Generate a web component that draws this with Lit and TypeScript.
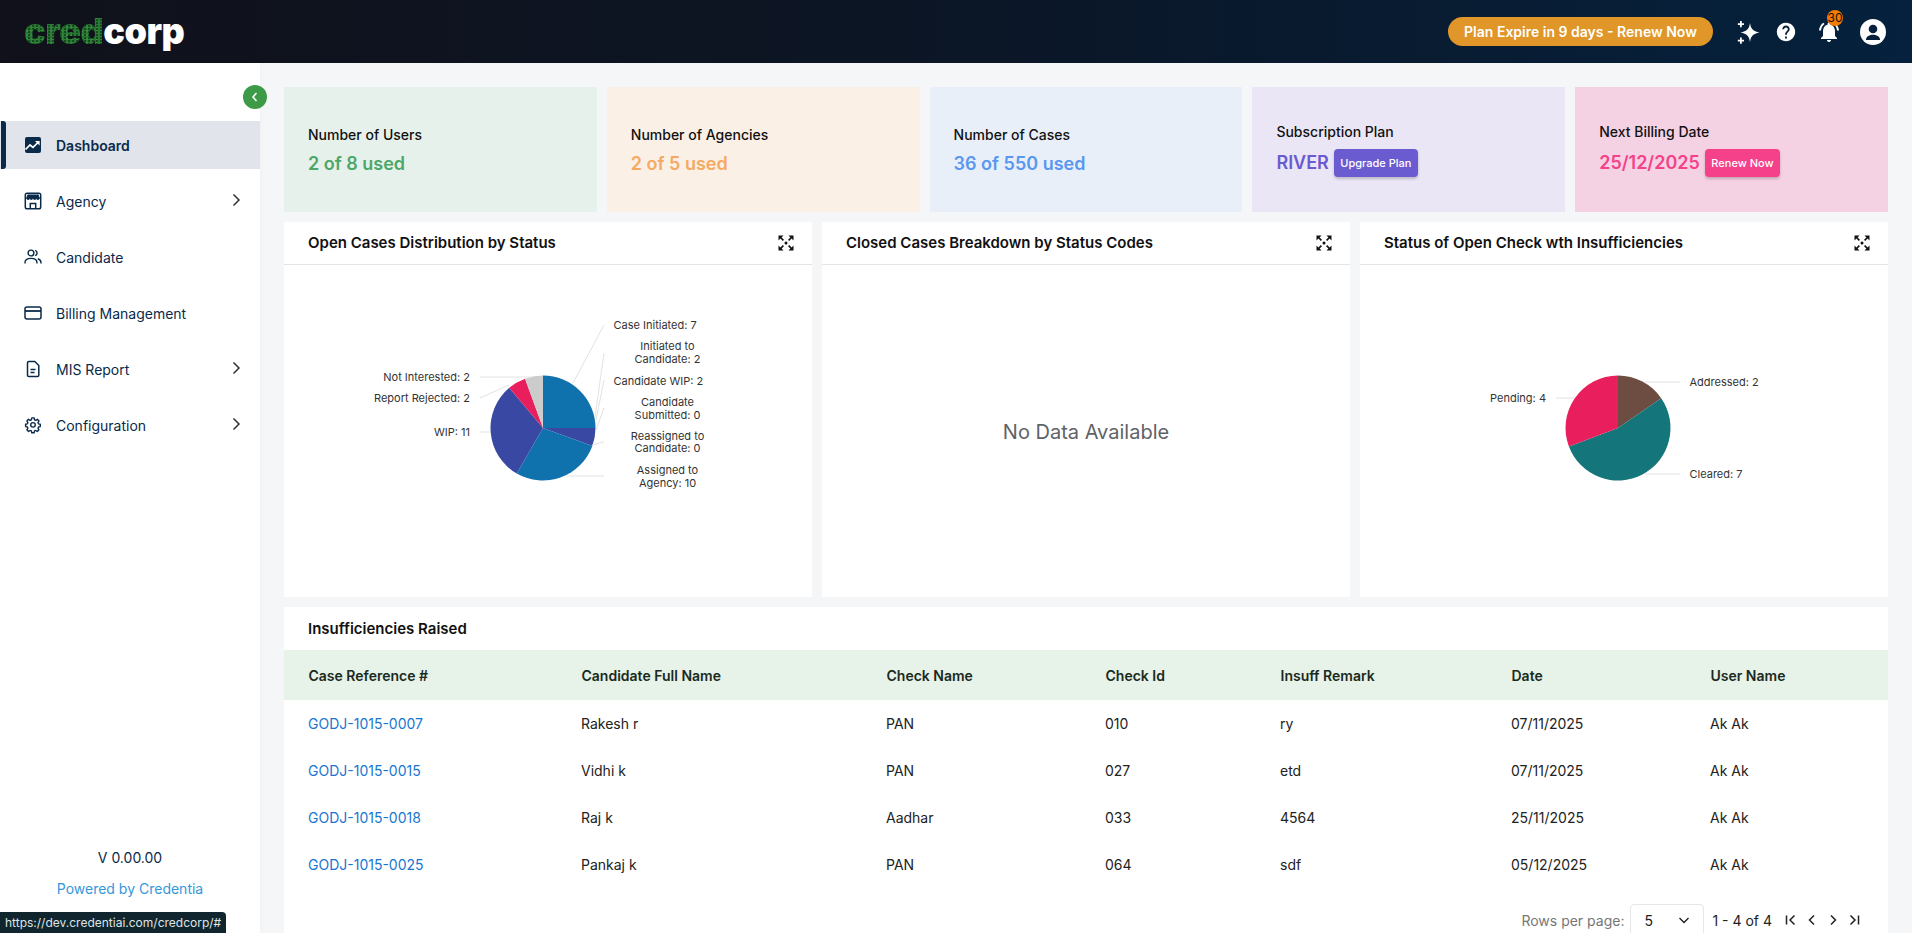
import { LitElement, html, css, svg } from "lit";
import { customElement } from "lit/decorators.js";

const icon = (d: string, size = 24, cls = "") =>
  html`<svg class=${cls} width=${size} height=${size} viewBox="0 0 24 24" fill="currentColor"><path d=${d}></path></svg>`;

const P = {
  help: "M12 2C6.48 2 2 6.48 2 12s4.48 10 10 10 10-4.48 10-10S17.52 2 12 2zm1 17h-2v-2h2v2zm2.07-7.75l-.9.92C13.45 12.9 13 13.5 13 15h-2v-.5c0-1.1.45-2.1 1.17-2.83l1.24-1.26c.37-.36.59-.86.59-1.41 0-1.1-.9-2-2-2s-2 .9-2 2H8c0-2.21 1.79-4 4-4s4 1.79 4 4c0 .88-.36 1.68-.93 2.25z",
  bell: "M7.58 4.08L6.15 2.65C3.75 4.48 2.17 7.3 2.03 10.5h2c.15-2.65 1.51-4.97 3.55-6.42zm12.39 6.42h2c-.15-3.2-1.73-6.02-4.12-7.85l-1.42 1.43c2.02 1.45 3.39 3.77 3.54 6.42zM18 11c0-3.07-1.64-5.64-4.5-6.32V4c0-.83-.67-1.5-1.5-1.5s-1.5.67-1.5 1.5v.68C7.63 5.36 6 7.92 6 11v5l-2 2v1h16v-1l-2-2v-5zm-6 11c.14 0 .27-.01.4-.04.65-.14 1.18-.58 1.44-1.18.1-.24.15-.5.15-.78h-4c.01 1.1.9 2 2.01 2z",
  expand: "M15 3l2.3 2.3-2.89 2.87 1.42 1.42L18.7 6.7 21 9V3zM3 9l2.3-2.3 2.87 2.89 1.42-1.42L6.7 5.3 9 3H3zm6 12l-2.3-2.3 2.89-2.87-1.42-1.42L5.3 17.3 3 15v6zm12-6l-2.3 2.3-2.87-2.89-1.42 1.42 2.89 2.87L15 21h6zM12 10.2a1.8 1.8 0 1 1 0 3.6 1.8 1.8 0 0 1 0-3.6z",
  sparkle: "M14 3c.9 6.100 3 8.300 9.500 9.500C17 13.700 14.900 15.900 14 22c-.9-6.100-3-8.300-9.500-9.500C11 11.300 13.100 9.100 14 3zM4 1h1.800v2.200H8V5H5.800v2.200H4V5H1.800V3.200H4zM4 17.500h1.800v2.200H8v1.800H5.800v2.200H4v-2.200H1.800v-1.800H4z",
};

const navIcons: Record<string, unknown> = {
  dashboard: html`<svg width="18" height="18" viewBox="0 0 18 18"><rect x="1" y="1" width="16" height="16" rx="2" fill="#0a2a4a"></rect><path d="M1.500 13.500 6 9l3 2.400L14.500 6" fill="none" stroke="#fff" stroke-width="1.700"></path><path d="M11 5h4.600v4.400z" fill="#fff"></path></svg>`,
  agency: html`<svg width="18" height="18" viewBox="0 0 18 18" fill="none" stroke="#0a2a4a" stroke-width="1.500"><rect x="1.300" y="1.300" width="15.400" height="15.400" rx="1.800"></rect><path d="M4 2.500 2.500 6.500c.8 1.300 2.500 1.300 3.300 0 .9 1.300 2.400 1.300 3.200 0 .8 1.300 2.300 1.300 3.200 0 .8 1.300 2.500 1.300 3.300 0L14 2.500" fill="#0a2a4a" stroke-width="1"></path><path d="M6.300 16.500v-5h5.400v5"></path></svg>`,
  candidate: html`<svg width="18" height="18" viewBox="0 0 18 18" fill="none" stroke="#0a2a4a" stroke-width="1.400"><circle cx="7" cy="5" r="2.900"></circle><path d="M11.200 2.300a2.900 2.900 0 0 1 0 5.400"></path><path d="M1 15.400v-.6c0-2.500 2.200-4.400 6-4.400s6 1.900 6 4.400v.6"></path><path d="M13.800 10.800c1.900.5 3.200 2 3.200 4v.6"></path></svg>`,
  billing: html`<svg width="18" height="18" viewBox="0 0 18 18" fill="none" stroke="#0a2a4a" stroke-width="1.500"><rect x="1" y="3" width="16" height="12" rx="2"></rect><path d="M1 7h16" stroke-width="1.800"></path></svg>`,
  report: html`<svg width="18" height="18" viewBox="0 0 18 18" fill="none" stroke="#0a2a4a" stroke-width="1.500"><path d="M4.800 1.500h6l4 4v9.700c0 .7-.6 1.300-1.300 1.300H4.800c-.7 0-1.300-.6-1.300-1.300V2.800c0-.7.6-1.300 1.300-1.300z"></path><path d="M6.500 9.500h5M6.500 12.500h4" stroke-width="1.300"></path></svg>`,
  config: html`<svg width="18" height="18" viewBox="-1 -1 26 26" fill="none" stroke="#0a2a4a" stroke-width="2" stroke-linejoin="round"><path d="M10.300 2.500h3.400l.5 2.800 1.700.8 2.400-1.500 2.400 2.400-1.500 2.400.8 1.700 2.500.6v3.400l-2.600.6-.7 1.700 1.400 2.300-2.400 2.400-2.300-1.400-1.700.7-.6 2.600h-3.400l-.6-2.600-1.700-.7-2.300 1.400-2.400-2.400 1.400-2.300-.7-1.700-2.600-.6v-3.400l2.500-.6.8-1.700-1.500-2.400 2.400-2.400 2.400 1.500 1.700-.8z" transform="translate(0 -.8)"></path><circle cx="12" cy="11.800" r="3.300"></circle></svg>`,
};

const nav = [
  { id: "dashboard", label: "Dashboard", active: true },
  { id: "agency", label: "Agency", more: true },
  { id: "candidate", label: "Candidate" },
  { id: "billing", label: "Billing Management" },
  { id: "report", label: "MIS Report", more: true },
  { id: "config", label: "Configuration", more: true },
];

const columns = [
  "Case Reference #",
  "Candidate Full Name",
  "Check Name",
  "Check Id",
  "Insuff Remark",
  "Date",
  "User Name",
];
const rows = [
  ["GODJ-1015-0007", "Rakesh r", "PAN", "010", "ry", "07/11/2025", "Ak Ak"],
  ["GODJ-1015-0015", "Vidhi k", "PAN", "027", "etd", "07/11/2025", "Ak Ak"],
  ["GODJ-1015-0018", "Raj k", "Aadhar", "033", "4564", "25/11/2025", "Ak Ak"],
  ["GODJ-1015-0025", "Pankaj k", "PAN", "064", "sdf", "05/12/2025", "Ak Ak"],
];

type Slice = [number, string];
function pie(cx: number, cy: number, r: number, slices: Slice[]) {
  const total = slices.reduce((a, s) => a + s[0], 0);
  let acc = 0;
  return slices.map(([v, color]) => {
    const a0 = (acc / total) * 2 * Math.PI;
    acc += v;
    const a1 = (acc / total) * 2 * Math.PI;
    const large = a1 - a0 > Math.PI ? 1 : 0;
    const pt = (a: number) => `${cx + r * Math.sin(a)} ${cy - r * Math.cos(a)}`;
    return svg`<path d="M${cx} ${cy}L${pt(a0)}A${r} ${r} 0 ${large} 1 ${pt(a1)}Z" fill=${color}></path>`;
  });
}
const label = (x: number, y: number, t: string, anchor = "start") =>
  svg`<text x=${x} y=${y + 4} text-anchor=${anchor}>${t}</text>`;
const line = (d: string) => svg`<path d=${d}></path>`;

@customElement("app-root")
export class AppRoot extends LitElement {
  static styles = css`
    :host {
      display: block;
      width: 1912px;
      height: 933px;
      overflow: hidden;
      position: relative;
      font-family: Inter, "Noto Sans", sans-serif;
      background: #f5f6f8;
      color: #111;
    }
    .top {
      height: 63px;
      display: flex;
      align-items: center;
      justify-content: space-between;
      background: linear-gradient(90deg, #10111a 0%, #0c1524 45%, #05213d 100%);
      padding: 0 26px 0 24px;
    }
    .logo {
      font-family: Inter, sans-serif;
      font-weight: 900;
      font-size: 36px;
      letter-spacing: -0.5px;
      line-height: 1;
      color: #fff;
      display: flex;
      margin-top: -2px;
    }
    .logo .g {
      color: transparent;
      background-color: #2a7a33;
      background-image: radial-gradient(circle at 1px 1px, #164a20 0.8px, transparent 1px),
        radial-gradient(circle at 3px 2px, #378f3e 0.8px, transparent 1px);
      background-size: 4px 3px, 5px 4px;
      -webkit-background-clip: text;
      background-clip: text;
    }
    .tools {
      display: flex;
      align-items: center;
      color: #fff;
    }
    .pill {
      width: 265px;
      height: 29px;
      border-radius: 15px;
      background: #e09628;
      color: #fff;
      font-size: 14px;
      font-weight: 600;
      display: flex;
      align-items: center;
      justify-content: center;
      margin-right: 20px;
    }
    .tool {
      display: flex;
      align-items: center;
      justify-content: center;
    }
    .t-spark { width: 30px; margin-right: 8px; }
    .t-help { width: 30px; margin-right: 13px; }
    .t-bell { width: 30px; margin-right: 16px; position: relative; }
    .badge {
      position: absolute;
      top: -10px;
      left: 13px;
      width: 16px;
      height: 16px;
      border-radius: 50%;
      background: #f57c00;
      color: #111;
      font-size: 12px;
      line-height: 16px;
      text-align: center;
    }
    .body {
      display: flex;
      height: 870px;
    }
    .side {
      width: 260px;
      flex: none;
      background: #fff;
      position: relative;
      display: flex;
      flex-direction: column;
      padding-top: 58px;
      box-sizing: border-box;
      box-shadow: 0 0 6px rgba(0, 0, 0, 0.03);
    }
    .collapse {
      position: absolute;
      top: 22px;
      left: 243px;
      width: 24px;
      height: 24px;
      border-radius: 50%;
      background: #3d9a47;
      display: flex;
      align-items: center;
      justify-content: center;
      z-index: 2;
    }
    .menu {
      display: flex;
      flex-direction: column;
      gap: 8px;
    }
    .item {
      height: 48px;
      display: flex;
      align-items: center;
      padding-left: 24px;
      padding-right: 17px;
      color: #0a2a4a;
      font-size: 14px;
      position: relative;
    }
    .item.active {
      background: #e1e4ea;
      font-weight: 600;
    }
    .item.active::before {
      content: "";
      position: absolute;
      left: 1px;
      top: 0;
      bottom: 0;
      width: 5px;
      background: #0a2a4a;
      border-radius: 0 3px 3px 0;
    }
    .item .name {
      margin-left: 14px;
      flex: 1;
    }
    .chev {
      margin-top: -2px;
      color: #333;
    }
    .foot {
      margin-top: auto;
      padding-bottom: 34px;
      text-align: center;
      font-size: 14px;
    }
    .ver {
      color: #0a2a4a;
      line-height: 20px;
      margin-bottom: 11px;
    }
    .pow {
      color: #3498db;
      line-height: 20px;
    }
    .status {
      position: absolute;
      left: 0;
      bottom: 0;
      width: 226px;
      height: 21px;
      box-sizing: border-box;
      padding-left: 5px;
      background: #10252d;
      color: #dfe5e8;
      font-size: 12px;
      line-height: 21px;
      white-space: nowrap;
      overflow: hidden;
      border-radius: 0 4px 0 0;
      z-index: 3;
    }
    .main {
      flex: 1;
      min-width: 0;
      padding: 24px 24px 0;
      display: flex;
      flex-direction: column;
      gap: 10px;
    }
    .cards {
      display: grid;
      grid-template-columns: repeat(5, 1fr);
      gap: 10px;
      height: 125px;
      flex: none;
    }
    .card {
      padding: 2px 0 0 24px;
      display: flex;
      flex-direction: column;
      justify-content: center;
      gap: 6px;
    }
    .card .lab {
      font-size: 14px;
      font-weight: 500;
      line-height: 20px;
      color: #111;
    }
    .card .val {
      font-size: 18px;
      font-weight: 600;
      line-height: 26px;
    }
    .card.plan { gap: 7px; padding: 0 0 1px 24px; }
    .card .vrow {
      display: flex;
      align-items: center;
      gap: 5px;
      height: 28px;
    }
    .btn {
      height: 28px;
      padding: 0 6.5px;
      border-radius: 4px;
      color: #fff;
      font-size: 11px;
      font-weight: 500;
      display: flex;
      align-items: center;
      box-shadow: 0 2px 3px rgba(0, 0, 0, 0.2);
    }
    .c-green { background: #e7f1ec; }
    .c-green .val { color: #4da768; }
    .c-orange { background: #fbf0e6; }
    .c-orange .val { color: #f5aa64; }
    .c-blue { background: #e8eff9; }
    .c-blue .val { color: #5a97ee; }
    .c-purple { background: #ebe6f5; }
    .c-purple .val { color: #6b5bd0; }
    .c-purple .btn { background: #6b5bd0; }
    .c-pink { background: #f5d2e3; }
    .c-pink .val { color: #f5418a; }
    .c-pink .btn { background: #f5418a; }
    .charts {
      display: grid;
      grid-template-columns: repeat(3, 1fr);
      gap: 10px;
      height: 375px;
      flex: none;
    }
    .panel {
      background: #fff;
      display: flex;
      flex-direction: column;
      min-width: 0;
    }
    .phead {
      height: 42px;
      flex: none;
      border-bottom: 1px solid #e3e4e6;
      display: flex;
      align-items: center;
      justify-content: space-between;
      padding: 0 16px 0 24px;
      font-size: 15px;
      font-weight: 600;
      color: #111;
    }
    .phead span {
      margin-top: -2px;
    }
    .pbody {
      flex: 1;
      min-height: 0;
      display: flex;
      align-items: center;
      justify-content: center;
    }
    .pbody svg {
      display: block;
    }
    .nodata {
      font-size: 20px;
      color: #5f6368;
      margin-top: 1px;
    }
    .chart text {
      font-family: Inter, sans-serif;
      font-size: 11px;
      fill: #333;
    }
    .chart .links {
      fill: none;
      stroke: #e2e2e2;
      stroke-width: 1;
    }
    .tablecard {
      background: #fff;
      flex: 1;
      min-height: 0;
      display: flex;
      flex-direction: column;
    }
    .ttitle {
      height: 43px;
      flex: none;
      display: flex;
      align-items: center;
      padding-left: 24px;
      font-size: 15px;
      font-weight: 600;
    }
    .tr {
      display: grid;
      grid-template-columns: 273px 305px 219px 175px 231px 199px 202px;
      align-items: center;
      height: 47px;
      flex: none;
      font-size: 14px;
      color: #222;
    }
    .tr > div {
      padding-left: 24px;
    }
    .tr.head {
      height: 50px;
      background: #e7f2e9;
      font-weight: 600;
      color: #1a2a20;
      font-size: 14px;
    }
    .tr.head > div {
      padding-left: 24.5px;
      padding-top: 1px;
    }
    .tr .link {
      color: #1976d2;
    }
    .pager {
      display: flex;
      align-items: center;
      justify-content: flex-end;
      height: 48px;
      flex: none;
      margin-top: 8px;
      padding-right: 27px;
      font-size: 14px;
      color: #222;
    }
    .pager .rpp {
      color: #777;
      margin-right: 6px;
    }
    .select {
      width: 74px;
      height: 40px;
      box-sizing: border-box;
      border: 1px solid #e6e7e9;
      border-radius: 4px;
      display: flex;
      align-items: center;
      justify-content: space-between;
      padding: 0 13px 8px 13px;
      margin-right: 8px;
      margin-top: 8px;
      color: #222;
    }
    .range {
      margin-right: 12px;
    }
    .pgicons {
      display: flex;
      gap: 7px;
      color: #222;
    }
    .avatar {
      display: block;
    }
  `;

  private openChart() {
    return html`<svg class="chart" width="528" height="332" viewBox="284 265 528 332">
      ${pie(543, 428, 52.5, [
        [9, "#1072ac"],
        [2, "#3949a3"],
        [10, "#1072ac"],
        [11, "#3949a3"],
        [2, "#e91e5c"],
        [2, "#cccccc"],
      ])}
      <g class="links">
        ${line("M604 325L573 383")}
        ${line("M604 353L595 417")}
        ${line("M604 380L596 420")}
        ${line("M604 408L596 430")}
        ${line("M604 442L592 445")}
        ${line("M604 476L566 476")}
        ${line("M480 377L532 377")}
        ${line("M480 398L509 385")}
        ${line("M480 432L490 432")}
      </g>
      ${label(613.5, 325, "Case Initiated: 7")}
      ${label(667.5, 346, "Initiated to", "middle")}
      ${label(667.5, 359, "Candidate: 2", "middle")}
      ${label(613.5, 381, "Candidate WIP: 2")}
      ${label(667.5, 402, "Candidate", "middle")}
      ${label(667.5, 415, "Submitted: 0", "middle")}
      ${label(667.5, 436, "Reassigned to", "middle")}
      ${label(667.5, 448, "Candidate: 0", "middle")}
      ${label(667.5, 470, "Assigned to", "middle")}
      ${label(667.5, 483, "Agency: 10", "middle")}
      ${label(470, 377, "Not Interested: 2", "end")}
      ${label(470, 398, "Report Rejected: 2", "end")}
      ${label(470, 432, "WIP: 11", "end")}
    </svg>`;
  }

  private insuffChart() {
    return html`<svg class="chart" width="528" height="332" viewBox="1360 265 528 332">
      ${pie(1618, 428, 52.5, [
        [2, "#6d4c41"],
        [7, "#14757a"],
        [4, "#e91e5c"],
      ])}
      <g class="links">
        ${line("M1680 382L1645 382")}
        ${line("M1680 474L1645 474")}
        ${line("M1556 398L1574 398")}
      </g>
      ${label(1689.5, 382, "Addressed: 2")}
      ${label(1689.5, 474, "Cleared: 7")}
      ${label(1546, 398, "Pending: 4", "end")}
    </svg>`;
  }

  private panel(title: string, content: unknown) {
    return html`<section class="panel">
      <div class="phead"><span>${title}</span>${icon(P.expand, 20)}</div>
      <div class="pbody">${content}</div>
    </section>`;
  }

  render() {
    return html`
      <header class="top">
        <div class="logo"><span class="g">cred</span><span>corp</span></div>
        <div class="tools">
          <div class="pill">Plan Expire in 9 days - Renew Now</div>
          <div class="tool t-spark">${icon(P.sparkle, 24)}</div>
          <div class="tool t-help">${icon(P.help, 22)}</div>
          <div class="tool t-bell">${icon(P.bell, 24)}<span class="badge">30</span></div>
          <div class="tool">
            <svg class="avatar" width="26" height="26" viewBox="0 0 26 26">
              <circle cx="13" cy="13" r="13" fill="#fff"></circle>
              <circle cx="13" cy="10" r="4.300" fill="#05213d"></circle>
              <path d="M6 20.500c0-3.300 4-4.800 7-4.800s7 1.500 7 4.800v.5H6z" fill="#05213d"></path>
            </svg>
          </div>
        </div>
      </header>
      <div class="body">
        <aside class="side">
          <div class="collapse">
            <svg width="14" height="14" viewBox="0 0 14 14" fill="none" stroke="#fff" stroke-width="1.600"><path d="M8.500 3 5 7l3.500 4"></path></svg>
          </div>
          <nav class="menu">
            ${nav.map(
              (n) => html`<div class="item ${n.active ? "active" : ""}">
                ${navIcons[n.id]}
                <span class="name">${n.label}</span>
                ${n.more
                  ? html`<svg class="chev" width="14" height="14" viewBox="0 0 14 14" fill="none" stroke="currentColor" stroke-width="1.500"><path d="M4.500 1.500 10 7l-5.500 5.500"></path></svg>`
                  : ""}
              </div>`
            )}
          </nav>
          <div class="foot">
            <div class="ver">V 0.00.00</div>
            <div class="pow">Powered by Credentia</div>
          </div>
        </aside>
        <main class="main">
          <div class="cards">
            <div class="card c-green"><div class="lab">Number of Users</div><div class="val">2 of 8 used</div></div>
            <div class="card c-orange"><div class="lab">Number of Agencies</div><div class="val">2 of 5 used</div></div>
            <div class="card c-blue"><div class="lab">Number of Cases</div><div class="val">36 of 550 used</div></div>
            <div class="card plan c-purple">
              <div class="lab">Subscription Plan</div>
              <div class="vrow"><span class="val">RIVER</span><span class="btn">Upgrade Plan</span></div>
            </div>
            <div class="card plan c-pink">
              <div class="lab">Next Billing Date</div>
              <div class="vrow"><span class="val">25/12/2025</span><span class="btn">Renew Now</span></div>
            </div>
          </div>
          <div class="charts">
            ${this.panel("Open Cases Distribution by Status", this.openChart())}
            ${this.panel("Closed Cases Breakdown by Status Codes", html`<div class="nodata">No Data Available</div>`)}
            ${this.panel("Status of Open Check wth Insufficiencies", this.insuffChart())}
          </div>
          <section class="tablecard">
            <div class="ttitle">Insufficiencies Raised</div>
            <div class="tr head">${columns.map((c) => html`<div>${c}</div>`)}</div>
            ${rows.map(
              (r) => html`<div class="tr">
                ${r.map((c, i) => html`<div class=${i === 0 ? "link" : ""}>${c}</div>`)}
              </div>`
            )}
            <div class="pager">
              <span class="rpp">Rows per page:</span>
              <div class="select">
                <span>5</span>
                <svg width="12" height="12" viewBox="0 0 12 12" fill="none" stroke="currentColor" stroke-width="1.400"><path d="M1.500 4 6 8.500 10.500 4"></path></svg>
              </div>
              <span class="range">1 - 4 of 4</span>
              <div class="pgicons">
                <svg width="14" height="14" viewBox="0 0 14 14" fill="none" stroke="currentColor" stroke-width="1.500"><path d="M2.500 2.500v9M10.500 2.500 6 7l4.500 4.500"></path></svg>
                <svg width="14" height="14" viewBox="0 0 14 14" fill="none" stroke="currentColor" stroke-width="1.500"><path d="M9 2.500 4.500 7 9 11.500"></path></svg>
                <svg width="14" height="14" viewBox="0 0 14 14" fill="none" stroke="currentColor" stroke-width="1.500"><path d="M5 2.500 9.500 7 5 11.500"></path></svg>
                <svg width="14" height="14" viewBox="0 0 14 14" fill="none" stroke="currentColor" stroke-width="1.500"><path d="M3.500 2.500 8 7l-4.500 4.500M11.500 2.500v9"></path></svg>
              </div>
            </div>
          </section>
        </main>
      </div>
      <div class="status">https://dev.credentiai.com/credcorp/#</div>
    `;
  }
}
